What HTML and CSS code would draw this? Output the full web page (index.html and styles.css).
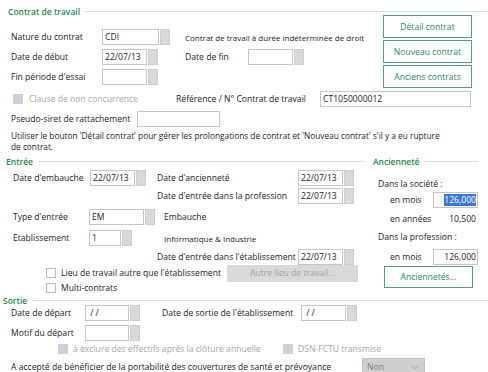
FILE: index.html
```html
<!DOCTYPE html>
<html lang="fr">
<head>
    <meta charset="UTF-8">
    <meta name="viewport" content="width=device-width, initial-scale=1.0">
    <title>Contrat de travail</title>
    <link rel="stylesheet" href="styles.css">
</head>
<body>
<div class="form">

    <!-- Contrat de travail -->
    <div class="contrat">
        <div class="legend legend-contrat"><span>Contrat de travail</span><i></i></div>
        <div class="top">
            <div class="fields">
                <div class="row">
                    <span class="lbl" style="width:91px">Nature du contrat</span>
                    <span class="field"><span class="box" style="width:57px">CDI</span><span class="dots"></span></span>
                    <span class="note">Contrat de travail à durée indéterminée de droit</span>
                </div>
                <div class="row">
                    <span class="lbl" style="width:91px">Date de début</span>
                    <span class="field"><span class="box" style="width:45px">22/07/13</span><span class="dots"></span></span>
                    <span class="lbl lbl-fin">Date de fin</span>
                    <span class="field"><span class="box" style="width:45px"></span><span class="dots"></span></span>
                </div>
                <div class="row">
                    <span class="lbl" style="width:91px">Fin période d'essai</span>
                    <span class="field"><span class="box" style="width:45px"></span><span class="dots"></span></span>
                </div>
            </div>
            <div class="actions">
                <button class="btn">Détail contrat</button>
                <button class="btn">Nouveau contrat</button>
                <button class="btn">Anciens contrats</button>
            </div>
        </div>
        <div class="row row-ref">
            <span class="check disabled clause"><b></b>Clause de non concurrence</span>
            <span class="lbl" style="width:144px">Référence / N° Contrat de travail</span>
            <span class="box" style="width:151px">CT1050000012</span>
        </div>
        <div class="row">
            <span class="lbl" style="width:126px">Pseudo-siret de rattachement</span>
            <span class="box" style="width:83px"></span>
        </div>
        <p class="hint">Utiliser le bouton 'Détail contrat' pour gérer les prolongations de contrat et 'Nouveau contrat' s'il y a eu rupture de contrat.</p>
    </div>

    <!-- Entrée + Ancienneté -->
    <div class="middle">
        <div class="entree">
            <div class="legend legend-entree"><span>Entrée</span><i></i></div>
            <div class="row row-a">
                <span class="lbl" style="width:77px">Date d'embauche</span>
                <span class="field"><span class="box" style="width:45px">22/07/13</span><span class="dots"></span></span>
                <span class="lbl lbl-anc">Date d'ancienneté</span>
                <span class="field"><span class="box" style="width:45px">22/07/13</span><span class="dots"></span></span>
            </div>
            <div class="row row-a">
                <span class="lbl lbl-indent">Date d'entrée dans la profession</span>
                <span class="field"><span class="box" style="width:45px">22/07/13</span><span class="dots"></span></span>
            </div>
            <div class="row row-type">
                <span class="lbl" style="width:76px">Type d'entrée</span>
                <span class="field"><span class="box" style="width:55px">EM</span><span class="dots"></span></span>
                <span class="text-after">Embauche</span>
            </div>
            <div class="row row-etab">
                <span class="lbl" style="width:76px">Etablissement</span>
                <span class="field"><span class="box" style="width:32px">1</span><span class="dots"></span></span>
                <span class="note note-etab">Informatique &amp; Industrie</span>
            </div>
            <div class="row row-entree">
                <span class="lbl lbl-indent">Date d'entrée dans l'établissement</span>
                <span class="field"><span class="box" style="width:45px">22/07/13</span><span class="dots"></span></span>
            </div>
            <div class="row row-lieu">
                <span class="check lieu"><b></b>Lieu de travail autre que l'établissement</span>
                <button class="btn-off">Autre lieu de travail...</button>
            </div>
            <div class="row row-multi">
                <span class="check multi"><b></b>Multi-contrats</span>
            </div>
        </div>

        <div class="anc">
            <div class="legend legend-anc"><span>Ancienneté</span><i></i></div>
            <div class="line sub">Dans la société :</div>
            <div class="line">
                <span class="sub2">en mois</span>
                <span class="box num"><span class="sel">126,000</span></span>
            </div>
            <div class="line line-annees">
                <span class="sub2">en années</span>
                <span class="value">10,500</span>
            </div>
            <div class="line sub sub-prof">Dans la profession :</div>
            <div class="line line-prof">
                <span class="sub2">en mois</span>
                <span class="box num">126,000</span>
            </div>
            <button class="btn btn-anc">Anciennetés...</button>
        </div>
    </div>

    <!-- Sortie -->
    <div class="sortie">
        <div class="legend legend-sortie"><span>Sortie</span><i></i></div>
        <div class="row row-depart">
            <span class="lbl" style="width:74px">Date de départ</span>
            <span class="field"><span class="box" style="width:44px">&nbsp;/ /</span><span class="dots"></span></span>
            <span class="lbl lbl-sortie">Date de sortie de l'établissement</span>
            <span class="field"><span class="box" style="width:45px">&nbsp;/ /</span><span class="dots"></span></span>
        </div>
        <div class="row row-motif">
            <span class="lbl" style="width:74px">Motif du départ</span>
            <span class="field"><span class="box" style="width:44px"></span><span class="dots"></span></span>
        </div>
        <div class="row row-excl">
            <span class="check disabled exclure"><b></b>à exclure des effectifs après la clôture annuelle</span>
            <span class="check disabled"><b></b>DSN-FCTU transmise</span>
        </div>
        <div class="row row-porta">
            <span class="porta">A accepté de bénéficier de la portabilité des couvertures de santé et prévoyance</span>
            <span class="select">Non<svg width="7" height="5" viewBox="0 0 7 5"><polyline points="0.5,1 3.5,4 6.5,1" fill="none" stroke="#a8a8a8" stroke-width="1"/></svg></span>
        </div>
    </div>

</div>
</body>
</html>
```

FILE: styles.css
```css
body {
    margin: 0;
    font-family: "Open Sans", "Noto Sans", sans-serif;
    font-size: 8.6px;
    color: #1c1c1c;
    background: #fff;
}

.form {
    width: 488px;
    height: 372px;
    overflow: hidden;
}

/* Group titles with their rule */
.legend {
    display: flex;
    align-items: center;
    color: #24884f;
    font-weight: 600;
    font-size: 8.5px;
}

.legend i {
    flex: 1;
    height: 1px;
    background: #dedede;
    margin-left: 5px;
}

.legend-contrat {
    height: 22px;
    padding-left: 8px;
}

.legend-entree {
    height: 16px;
    padding-left: 6px;
}

.legend-anc {
    height: 16px;
    padding-left: 3px;
    margin-right: 10px;
}

.legend-sortie {
    height: 10px;
    padding-left: 3px;
}

/* Rows */
.row {
    display: flex;
    align-items: center;
    height: 20px;
}

.lbl {
    flex: none;
    white-space: nowrap;
}

.field {
    display: flex;
    flex: none;
}

.box {
    display: block;
    flex: none;
    box-sizing: border-box;
    height: 16px;
    border: 1px solid #c6c6c6;
    background: #fff;
    padding: 0 2px;
    line-height: 14px;
    white-space: nowrap;
    overflow: hidden;
}

.dots {
    display: flex;
    align-items: flex-end;
    justify-content: center;
    box-sizing: border-box;
    width: 10px;
    height: 16px;
    margin-left: 1px;
    background: #d8d8d8;
    border: 1px solid #cdcdcd;
}

.dots::after {
    content: "...";
    color: #f3f3f3;
    font-size: 6px;
    line-height: 6px;
    letter-spacing: -0.5px;
}

.note {
    font-size: 8px;
    margin-left: 15px;
    white-space: nowrap;
}

/* Contrat de travail */
.contrat {
    height: 153px;
}

.top {
    display: flex;
    height: 66px;
}

.fields {
    flex: 1;
    padding: 5px 0 0 11px;
}

.actions {
    display: flex;
    flex-direction: column;
    gap: 2px;
    width: 89px;
    margin: -7px 16px 0 0;
}

.btn {
    box-sizing: border-box;
    width: 89px;
    height: 23px;
    padding: 0;
    border: 1px solid #4f9f80;
    background: #fff;
    color: #2c8763;
    font-family: inherit;
    font-size: 8.6px;
}

.lbl-fin {
    width: 63px;
    margin-left: 27px;
}

.contrat > .row {
    padding-left: 11px;
}

.row-ref {
    margin-top: 1px;
}

.check {
    display: flex;
    align-items: center;
    white-space: nowrap;
}

.check b {
    box-sizing: border-box;
    width: 10px;
    height: 10px;
    border: 1px solid #bcbcbc;
    background: #fff;
    margin-right: 5px;
}

.check.disabled {
    color: #a7a7a7;
}

.check.disabled b {
    border: none;
    background: #c9d2db;
}

.clause {
    width: 163px;
    margin-left: 2px;
}

.clause b {
    margin-right: 6px;
}

.hint {
    margin: 1px 0 0;
    padding-left: 11px;
    width: 430px;
    font-size: 8.3px;
    line-height: 11px;
}

/* Entrée */
.middle {
    display: flex;
    height: 142px;
}

.entree {
    width: 365px;
}

.entree .row {
    padding-left: 13px;
}

.row-a {
    height: 18px;
}

.lbl-anc {
    width: 141px;
    margin-left: 11px;
}

.lbl-indent {
    width: 141px;
    margin-left: 144px;
}

.row-type {
    height: 18px;
    margin-top: 3px;
}

.text-after {
    margin-left: 9px;
}

.row-etab {
    height: 18px;
    margin-top: 3px;
}

.note-etab {
    margin-left: 32px;
}

.row-entree {
    height: 17px;
    margin-top: 1px;
}

.row-lieu {
    height: 16px;
}

.lieu {
    width: 181px;
    margin-left: 33px;
}

.btn-off {
    box-sizing: border-box;
    width: 131px;
    height: 17px;
    padding: 0;
    border: none;
    background: #d9d9d9;
    color: #a2a2a2;
    font-family: inherit;
    font-size: 8.6px;
}

.row-multi {
    height: 14px;
}

.multi {
    margin-left: 33px;
}

/* Ancienneté */
.anc {
    flex: 1;
    margin-left: 5px;
}

.line {
    display: flex;
    align-items: center;
    height: 16px;
}

.sub {
    padding-left: 8px;
    margin-top: 7px;
}

.sub2 {
    width: 43px;
    padding-left: 20px;
}

.num {
    width: 45px;
    text-align: right;
    padding-right: 1px;
}

.sel {
    background: #3a77d6;
    color: #fff;
}

.line-annees {
    margin-top: 3px;
}

.value {
    width: 45px;
    text-align: right;
    padding-right: 2px;
    box-sizing: border-box;
}

.sub-prof {
    margin-top: 2px;
}

.line-prof {
    margin-top: 4px;
}

.btn-anc {
    display: block;
    height: 22px;
    margin: 1px 0 0 14px;
}

/* Sortie */
.sortie .row {
    padding-left: 11px;
}

.row-depart {
    height: 16px;
}

.lbl-sortie {
    width: 139px;
    margin-left: 22px;
}

.row-motif {
    height: 16px;
    margin-top: 4px;
}

.row-excl {
    height: 16px;
}

.exclure {
    width: 225px;
    margin-left: 47px;
}

.row-porta {
    height: 18px;
    margin-top: 1px;
}

.porta {
    width: 351px;
    white-space: nowrap;
}

.select {
    display: flex;
    align-items: center;
    justify-content: space-between;
    box-sizing: border-box;
    width: 63px;
    height: 18px;
    padding: 0 6px 0 4px;
    background: #cfcfcf;
    border: 1px solid #c3c3c3;
    color: #7c7c7c;
}
```
